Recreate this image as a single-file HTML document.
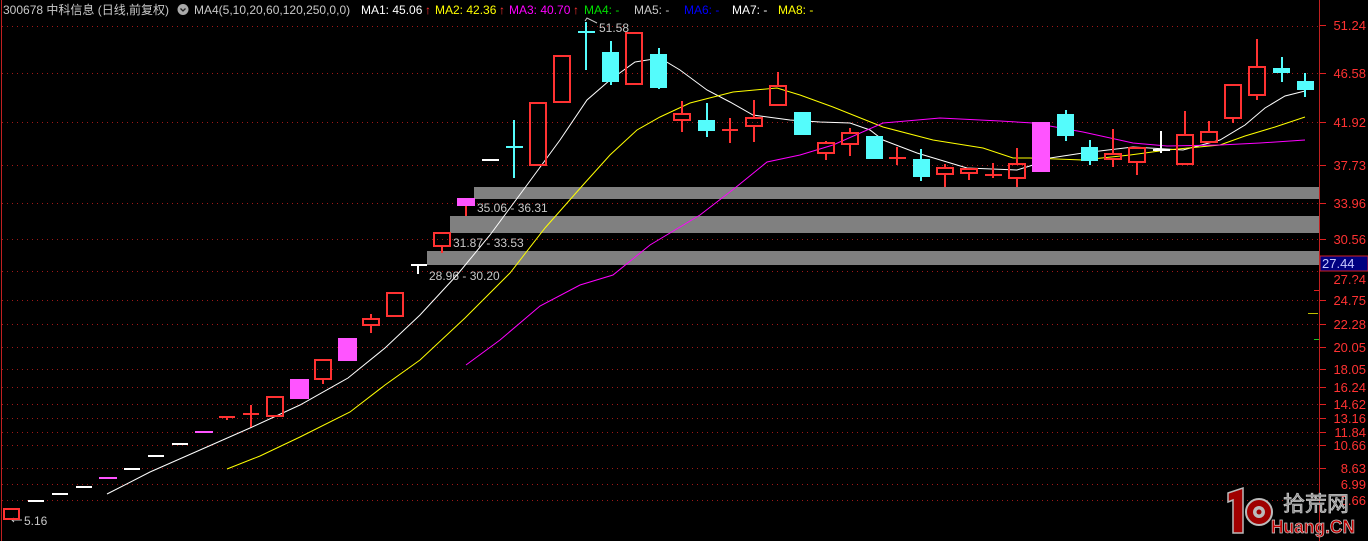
<!DOCTYPE html>
<html><head><meta charset="utf-8"><style>
html,body{margin:0;padding:0;background:#000;width:1368px;height:541px;overflow:hidden}
svg{display:block}
text{font-family:"Liberation Sans","Noto Sans CJK SC",sans-serif}
</style></head><body>
<svg width="1368" height="541" xmlns="http://www.w3.org/2000/svg">
<rect width="1368" height="541" fill="#000"/>
<line x1="1.5" y1="0" x2="1.5" y2="541" stroke="#c02020"/>
<line x1="1319.5" y1="0" x2="1319.5" y2="541" stroke="#c02020"/>
<g stroke="#a01818" stroke-dasharray="1,4" stroke-width="1">
<line x1="2" y1="26.5" x2="1318" y2="26.5"/>
<line x1="2" y1="73.5" x2="1318" y2="73.5"/>
<line x1="2" y1="122.5" x2="1318" y2="122.5"/>
<line x1="2" y1="165.5" x2="1318" y2="165.5"/>
<line x1="2" y1="203.5" x2="1318" y2="203.5"/>
<line x1="2" y1="239.5" x2="1318" y2="239.5"/>
<line x1="2" y1="271.5" x2="1318" y2="271.5"/>
<line x1="2" y1="300.5" x2="1318" y2="300.5"/>
<line x1="2" y1="324.5" x2="1318" y2="324.5"/>
<line x1="2" y1="347.5" x2="1318" y2="347.5"/>
<line x1="2" y1="369.5" x2="1318" y2="369.5"/>
<line x1="2" y1="387.5" x2="1318" y2="387.5"/>
<line x1="2" y1="404.5" x2="1318" y2="404.5"/>
<line x1="2" y1="418.5" x2="1318" y2="418.5"/>
<line x1="2" y1="432.5" x2="1318" y2="432.5"/>
<line x1="2" y1="445.5" x2="1318" y2="445.5"/>
<line x1="2" y1="468.5" x2="1318" y2="468.5"/>
<line x1="2" y1="484.5" x2="1318" y2="484.5"/>
<line x1="2" y1="500.5" x2="1318" y2="500.5"/>
</g>
<g stroke="#e02020" stroke-width="1">
<line x1="1320" y1="25.5" x2="1326" y2="25.5"/><line x1="1320" y1="73.5" x2="1326" y2="73.5"/><line x1="1320" y1="122.5" x2="1326" y2="122.5"/><line x1="1320" y1="165.5" x2="1326" y2="165.5"/><line x1="1320" y1="203.5" x2="1326" y2="203.5"/><line x1="1320" y1="239.5" x2="1326" y2="239.5"/><line x1="1320" y1="300.5" x2="1326" y2="300.5"/><line x1="1320" y1="324.5" x2="1326" y2="324.5"/><line x1="1320" y1="347.5" x2="1326" y2="347.5"/><line x1="1320" y1="369.5" x2="1326" y2="369.5"/><line x1="1320" y1="387.5" x2="1326" y2="387.5"/><line x1="1320" y1="404.5" x2="1326" y2="404.5"/><line x1="1320" y1="418.5" x2="1326" y2="418.5"/><line x1="1320" y1="432.5" x2="1326" y2="432.5"/><line x1="1320" y1="445.5" x2="1326" y2="445.5"/><line x1="1320" y1="468.5" x2="1326" y2="468.5"/>
<line x1="1314" y1="290.5" x2="1319" y2="290.5"/>
</g>
<line x1="1308" y1="313.5" x2="1318" y2="313.5" stroke="#c0c000"/>
<line x1="1314" y1="339.5" x2="1319" y2="339.5" stroke="#20c020"/>
<g fill="#ff3232" font-size="13" text-anchor="end">
<text x="1366" y="30">51.24</text><text x="1366" y="78">46.58</text><text x="1366" y="127">41.92</text><text x="1366" y="170">37.73</text><text x="1366" y="208">33.96</text><text x="1366" y="244">30.56</text><text x="1366" y="284">27.?4</text><text x="1366" y="305">24.75</text><text x="1366" y="329">22.28</text><text x="1366" y="352">20.05</text><text x="1366" y="374">18.05</text><text x="1366" y="392">16.24</text><text x="1366" y="409">14.62</text><text x="1366" y="423">13.16</text><text x="1366" y="437">11.84</text><text x="1366" y="450">10.66</text><text x="1366" y="473">8.63</text><text x="1366" y="489">6.99</text><text x="1366" y="505">5.66</text>
</g>
<rect x="1320" y="256" width="48" height="15" fill="#000080" stroke="#d02020"/>
<text x="1322" y="268" fill="#c8c8ff" font-size="13">27.44</text>
<rect x="474" y="187" width="845" height="12" fill="#808080"/>
<rect x="450" y="216" width="869" height="17" fill="#808080"/>
<rect x="427" y="251" width="892" height="14" fill="#808080"/>
<g fill="#c8c8c8" font-size="12">
<text x="477" y="212">35.06 - 36.31</text>
<text x="453" y="247">31.87 - 33.53</text>
<text x="429" y="280">28.96 - 30.20</text>
<text x="599" y="32">51.58</text>
<text x="24" y="525">5.16</text>
</g>
<path d="M585 21 L587 18 L597 23" stroke="#c8c8c8" fill="none"/>
<path d="M22 520 L12 520 M14 518 L12 520 L14 522" stroke="#c8c8c8" fill="none"/>
<polyline fill="none" stroke="#fff" stroke-width="1" points="107,494 150,472 200,450 250,428 300,405 348,378 385,348 420,315 457,275 490,235 527,185 560,140 587,100 610,80 635,62 660,58 680,70 707,90 730,102 753,115 790,120 820,122 850,123 870,130 883,140 917,153 967,168 1017,170 1033,165 1050,158 1083,153 1133,147 1183,150 1220,140 1245,125 1265,108 1285,96 1305,91"/>
<polyline fill="none" stroke="#ffff00" stroke-width="1" points="227,469 260,456 300,437 350,412 385,385 420,360 465,318 510,273 545,228 583,185 610,155 637,130 660,117 690,103 733,92 777,88 800,95 833,107 883,127 933,140 983,148 1013,158 1030,158 1083,160 1130,155 1167,150 1220,145 1245,136 1275,127 1305,117"/>
<polyline fill="none" stroke="#ff00ff" stroke-width="1" points="466,365 500,340 540,306 580,285 613,275 650,245 700,215 735,188 767,162 800,155 833,145 883,123 940,118 1000,121 1033,123 1083,132 1133,143 1167,146 1220,145 1260,143 1305,140"/>
<g fill="#fff">
<rect x="28" y="500" width="16" height="2"/><rect x="52" y="493" width="16" height="2"/><rect x="76" y="486" width="16" height="2"/><rect x="124" y="468" width="16" height="2"/><rect x="148" y="455" width="16" height="2"/><rect x="172" y="443" width="16" height="2"/><rect x="482" y="159" width="17" height="2"/>
<rect x="411" y="264" width="16" height="2"/><rect x="417" y="264" width="2" height="10"/>
<rect x="1153" y="149" width="17" height="2"/><rect x="1160" y="131" width="2" height="22"/>
</g>
<g fill="#ff54ff">
<rect x="99" y="477" width="18" height="2"/><rect x="195" y="431" width="18" height="2"/>
<rect x="290" y="379" width="19" height="20"/><rect x="338" y="338" width="19" height="23"/><rect x="457" y="198" width="18" height="8"/><rect x="1032" y="122" width="18" height="50"/>
</g>
<g stroke="#ff3232" stroke-width="2" fill="none">
<rect x="4" y="509" width="15" height="10"/>
<line x1="219" y1="417" x2="235" y2="417"/><line x1="227" y1="416" x2="227" y2="420"/>
<line x1="243" y1="414" x2="259" y2="414"/><line x1="251" y1="405" x2="251" y2="427"/>
<rect x="267" y="397" width="16" height="19"/>
<rect x="315" y="360" width="16" height="19"/><line x1="323" y1="379" x2="323" y2="384"/>
<rect x="363" y="319" width="16" height="6"/><line x1="371" y1="314" x2="371" y2="319"/><line x1="371" y1="325" x2="371" y2="333"/>
<rect x="387" y="293" width="16" height="23"/>
<rect x="434" y="233" width="16" height="13"/><line x1="442" y1="246" x2="442" y2="253"/>
<line x1="466" y1="206" x2="466" y2="216"/>
<rect x="530" y="103" width="16" height="62"/>
<rect x="554" y="56" width="16" height="46"/>
<rect x="626" y="33" width="16" height="51"/>
<rect x="674" y="114" width="16" height="6"/><line x1="682" y1="101" x2="682" y2="114"/><line x1="682" y1="120" x2="682" y2="132"/>
<line x1="722" y1="130" x2="738" y2="130"/><line x1="730" y1="118" x2="730" y2="143"/>
<rect x="746" y="118" width="16" height="8"/><line x1="754" y1="100" x2="754" y2="118"/><line x1="754" y1="126" x2="754" y2="142"/>
<rect x="770" y="86" width="16" height="19"/><line x1="778" y1="72" x2="778" y2="86"/>
<rect x="818" y="143" width="16" height="10"/><line x1="826" y1="141" x2="826" y2="143"/><line x1="826" y1="153" x2="826" y2="160"/>
<rect x="842" y="133" width="16" height="11"/><line x1="850" y1="128" x2="850" y2="133"/><line x1="850" y1="144" x2="850" y2="156"/>
<line x1="889" y1="158" x2="906" y2="158"/><line x1="897" y1="147" x2="897" y2="165"/>
<rect x="937" y="168" width="16" height="6"/><line x1="945" y1="164" x2="945" y2="168"/><line x1="945" y1="174" x2="945" y2="187"/>
<rect x="961" y="169" width="16" height="4"/><line x1="969" y1="173" x2="969" y2="180"/>
<line x1="985" y1="175" x2="1002" y2="175"/><line x1="993" y1="163" x2="993" y2="178"/>
<rect x="1009" y="164" width="16" height="14"/><line x1="1017" y1="148" x2="1017" y2="164"/><line x1="1017" y1="178" x2="1017" y2="187"/>
<rect x="1105" y="154" width="16" height="5"/><line x1="1113" y1="129" x2="1113" y2="154"/><line x1="1113" y1="159" x2="1113" y2="167"/>
<rect x="1129" y="148" width="16" height="14"/><line x1="1137" y1="162" x2="1137" y2="175"/>
<rect x="1177" y="135" width="16" height="29"/><line x1="1185" y1="111" x2="1185" y2="135"/>
<rect x="1201" y="132" width="16" height="10"/><line x1="1209" y1="121" x2="1209" y2="132"/>
<rect x="1225" y="85" width="16" height="33"/><line x1="1233" y1="118" x2="1233" y2="123"/>
<rect x="1249" y="67" width="16" height="28"/><line x1="1257" y1="39" x2="1257" y2="67"/><line x1="1257" y1="95" x2="1257" y2="100"/>
</g>
<g fill="#54fcfc">
<rect x="506" y="146" width="17" height="2"/><rect x="513" y="120" width="2" height="58"/>
<rect x="578" y="31" width="17" height="2"/><rect x="585" y="22" width="2" height="48"/>
<rect x="602" y="52" width="17" height="30"/><rect x="610" y="41" width="2" height="44"/>
<rect x="650" y="54" width="17" height="34"/><rect x="658" y="48" width="2" height="41"/>
<rect x="698" y="120" width="17" height="11"/><rect x="706" y="103" width="2" height="34"/>
<rect x="794" y="112" width="17" height="23"/>
<rect x="866" y="136" width="17" height="23"/>
<rect x="913" y="159" width="17" height="18"/><rect x="920" y="149" width="2" height="32"/>
<rect x="1057" y="114" width="17" height="22"/><rect x="1065" y="110" width="2" height="31"/>
<rect x="1081" y="147" width="17" height="14"/><rect x="1089" y="140" width="2" height="25"/>
<rect x="1273" y="68" width="17" height="5"/><rect x="1281" y="57" width="2" height="25"/>
<rect x="1297" y="81" width="17" height="9"/><rect x="1304" y="73" width="2" height="24"/>
</g>
<g>
<path d="M1228 493 L1243 488 L1243 533 L1233 533 L1233 500 L1228 502 Z" fill="#a00000" stroke="#bbb" stroke-width="1.5"/>
<circle cx="1259" cy="512" r="13" fill="#a00000" stroke="#bbb" stroke-width="2"/>
<circle cx="1259" cy="512" r="6" fill="#bbb"/><circle cx="1259" cy="512" r="2.5" fill="#a00000"/>
<text x="1283" y="511" font-size="21" fill="#888" stroke="#ccc" stroke-width="0.7" textLength="66" lengthAdjust="spacingAndGlyphs">拾荒网</text>
<text x="1271" y="533" font-size="18" font-weight="bold" fill="#c00000" stroke="#ccc" stroke-width="0.7" textLength="84" lengthAdjust="spacingAndGlyphs">Huang.CN</text>
</g>
<text x="3" y="14" font-size="12" fill="#c8c8c8">300678 中科信息 (日线,前复权)</text>
<circle cx="183" cy="9.5" r="5.5" fill="#aaa"/><path d="M180.5 8.5 L183 11 L185.5 8.5" stroke="#222" fill="none" stroke-width="1.3"/>
<text x="194" y="14" font-size="12" fill="#c8c8c8">MA4(5,10,20,60,120,250,0,0)</text>
<text x="361" y="14" font-size="12" fill="#fff">MA1: 45.06</text><text x="425" y="14" font-size="12" fill="#ff3232">↑</text>
<text x="435" y="14" font-size="12" fill="#ffff00">MA2: 42.36</text><text x="499" y="14" font-size="12" fill="#ff3232">↑</text>
<text x="509" y="14" font-size="12" fill="#ff00ff">MA3: 40.70</text><text x="573" y="14" font-size="12" fill="#ff3232">↑</text>
<text x="584" y="14" font-size="12" fill="#00e000">MA4: -</text>
<text x="634" y="14" font-size="12" fill="#c8c8c8">MA5: -</text>
<text x="684" y="14" font-size="12" fill="#0000ff">MA6: -</text>
<text x="732" y="14" font-size="12" fill="#fff">MA7: -</text>
<text x="778" y="14" font-size="12" fill="#ffff00">MA8: -</text>
</svg>
</body></html>
